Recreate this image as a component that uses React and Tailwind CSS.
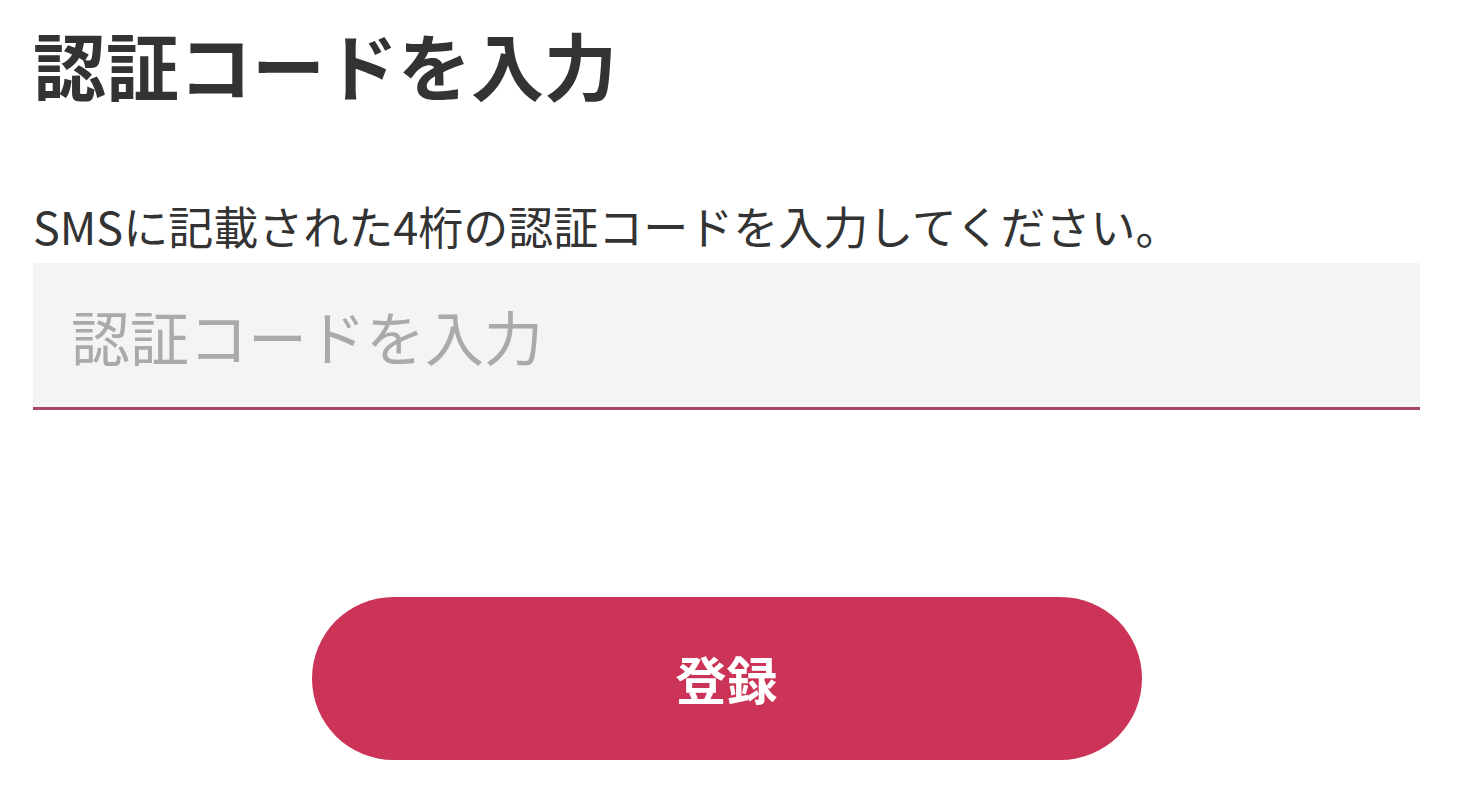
import React from 'react';

function App() {
  return (
    <div
      className="min-h-screen w-[1472px] bg-white pl-[33px] pr-[52px] text-[#333333]"
      style={{ fontFamily: '"Noto Sans CJK JP", "Noto Sans", sans-serif' }}
    >
      <h1 className="pt-[27px] text-[73px] font-bold leading-none">
        認証コードを入力
      </h1>

      <p className="mt-[103px] text-[45px] leading-none">
        SMSに記載された4桁の認証コードを入力してください。
      </p>

      <div className="mt-[15px] h-[147px] w-[1387px] border-b-[3px] border-[#a8456a] bg-[#f4f4f4]">
        <input
          type="text"
          placeholder="認証コードを入力"
          className="h-full w-full bg-transparent pl-[38px] text-[59px] text-[#333333] outline-none placeholder:text-[#aaaaaa]"
          style={{ fontFamily: '"Noto Sans CJK JP", "Noto Sans", sans-serif' }}
        />
      </div>

      {/* submit */}
      <div className="mt-[187px] flex w-[1387px] justify-center">
        <button className="flex h-[163px] w-[830px] items-center justify-center rounded-full bg-[#cb3357] text-[51px] font-bold text-white">
          登録
        </button>
      </div>
    </div>
  );
}

export default App;
